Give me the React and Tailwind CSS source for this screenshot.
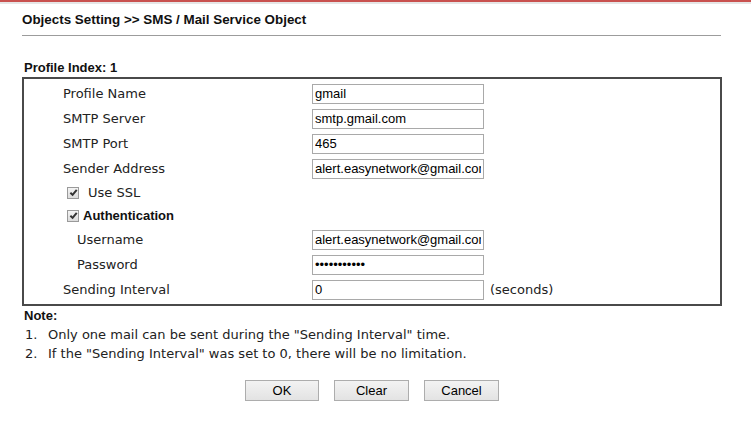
import React from 'react';

const arial = "font-['Liberation_Sans',Arial,sans-serif]";
const verdana = "font-['DejaVu_Sans',Verdana,sans-serif]";

function Check() {
    return (
        <span className="inline-flex h-[12px] w-[12px] items-center justify-center border border-[#9a9a9a] bg-gradient-to-b from-[#f4f4f4] to-[#dcdcdc]">
            <svg className="h-[9px] w-[9px]" viewBox="0 0 10 10">
                <path d="M1.5 5.2 L4 7.6 L8.6 2" fill="none" stroke="#333" strokeWidth="2.2" />
            </svg>
        </span>
    );
}

function FieldRow({ label, value, indent = 'pl-[39px]', type = 'text', suffix }) {
    return (
        <div className="flex h-[25px] items-center">
            <div className={`w-[288px] ${indent} ${verdana} text-[13px] text-[#222]`}>{label}</div>
            <input
                type={type}
                defaultValue={value}
                readOnly
                className={`h-[20px] w-[172px] border border-[#a9a9a9] bg-white px-[2px] ${arial} text-[13px] text-black outline-none`}
            />
            {suffix && <span className={`ml-[6px] ${verdana} text-[13px] text-[#222]`}>{suffix}</span>}
        </div>
    );
}

function Btn({ children, w = 'w-[75px]' }) {
    return (
        <button className={`h-[21px] ${w} border border-[#adadad] bg-gradient-to-b from-[#f3f3f3] to-[#e3e3e3] ${arial} text-[13px] text-black`}>
            {children}
        </button>
    );
}

export default function App() {
    return (
        <div className="min-h-[429px] w-[751px] bg-white">
            {/* top strip */}
            <div className="h-[2px] bg-[#c9514f]" />
            <div className="h-[2px] bg-[#e6e6e6]" />

            <div className="ml-[22px] w-[700px]">
                <div className={`mt-[8px] h-[16px] leading-[16px] ${arial} text-[13.4px] font-bold text-[#111]`}>
                    Objects Setting &gt;&gt; SMS / Mail Service Object
                </div>
                <div className="mt-[7px] h-px w-[699px] bg-[#9c9c9c]" />

                <div className={`mt-[24px] h-[16px] pl-[2px] leading-[16px] ${arial} text-[13px] font-bold text-[#111]`}>
                    Profile Index: 1
                </div>

                <div className="mt-[1px] border-2 border-[#4a4a4a] pt-[2px] pb-[2px]">
                    <FieldRow label="Profile Name" value="gmail" />
                    <FieldRow label="SMTP Server" value="smtp.gmail.com" />
                    <FieldRow label="SMTP Port" value="465" />
                    <FieldRow label="Sender Address" value="alert.easynetwork@gmail.com" />

                    <div className="flex h-[23px] items-center pl-[43px]">
                        <Check />
                        <span className={`ml-[9px] ${verdana} text-[13px] text-[#222]`}>Use SSL</span>
                    </div>
                    <div className="flex h-[23px] items-center pl-[43px]">
                        <Check />
                        <span className={`ml-[4px] ${arial} text-[13px] font-bold text-[#111]`}>Authentication</span>
                    </div>

                    <FieldRow label="Username" value="alert.easynetwork@gmail.com" indent="pl-[53px]" />
                    <FieldRow label="Password" value="***********" type="password" indent="pl-[53px]" />
                    <FieldRow label="Sending Interval" value="0" suffix="(seconds)" />
                </div>

                <div className={`mt-[2px] h-[16px] pl-[2px] leading-[16px] ${arial} text-[13px] font-bold text-[#111]`}>Note:</div>
                <div className={`mt-[1px] ${verdana} text-[13px] leading-[19px] text-[#222]`}>
                    <div className="flex">
                        <span className="w-[26px] pl-[3px]">1.</span>
                        <span>Only one mail can be sent during the "Sending Interval" time.</span>
                    </div>
                    <div className="flex">
                        <span className="w-[26px] pl-[3px]">2.</span>
                        <span>If the "Sending Interval" was set to 0, there will be no limitation.</span>
                    </div>
                </div>

                <div className="mt-[17px] flex justify-center gap-[15px]">
                    <Btn w="w-[74px]">OK</Btn>
                    <Btn>Clear</Btn>
                    <Btn>Cancel</Btn>
                </div>
            </div>
        </div>
    );
}
